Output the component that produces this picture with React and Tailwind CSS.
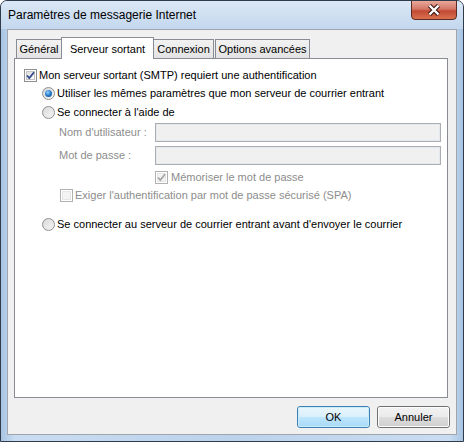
import React from 'react'

const font = { fontFamily: '"Liberation Sans", Arial, sans-serif' }

function CheckBox({ checked, disabled }) {
  return (
    <span
      className={`relative inline-block w-[13px] h-[13px] shrink-0 border ${disabled ? 'border-[#b1b1b1]' : 'border-[#8e8f8f]'}`}
    >
      <span
        className={`absolute inset-[1px] border ${disabled ? 'border-[#e6e6e6] bg-[#f4f4f4]' : 'border-[#c3c3c3] bg-gradient-to-br from-[#dcdcdc] to-[#ffffff]'}`}
      />
      {checked && (
        <svg className="absolute inset-0" width="11" height="11" viewBox="0 0 11 11">
          <path
            d="M2 5.5 L4.3 8 L9 2.2"
            fill="none"
            stroke={disabled ? '#a6a6a6' : '#324a8c'}
            strokeWidth="1.8"
          />
        </svg>
      )}
    </span>
  )
}

function Radio({ checked }) {
  return (
    <span className="relative inline-block w-[13px] h-[13px] shrink-0 rounded-full border border-[#8e8f8f] bg-gradient-to-br from-[#d6d6d6] to-[#fbfbfb]">
      <span className="absolute inset-[1px] rounded-full border border-[#e6e6e6]" />
      {checked && (
        <span className="absolute left-[2px] top-[2px] w-[7px] h-[7px] rounded-full bg-[radial-gradient(circle_at_40%_35%,#9bd2fb_0%,#2a83d1_45%,#0d3c84_100%)]" />
      )}
    </span>
  )
}

function Tab({ children, active, className = '' }) {
  if (active) {
    return (
      <div
        className={`relative z-10 h-[22px] -mb-[1px] flex justify-center items-start pt-[3px] bg-white border border-b-0 border-[#898c95] whitespace-nowrap ${className}`}
      >
        {children}
      </div>
    )
  }
  return (
    <div
      className={`h-[19px] mt-[3px] flex items-center justify-center pt-[1px] bg-gradient-to-b from-[#f2f2f2] to-[#e3e3e3] border border-b-0 border-[#898c95] whitespace-nowrap ${className}`}
    >
      {children}
    </div>
  )
}

function Field() {
  return (
    <div className="w-[286px] h-[19px] border border-[#abadb3] bg-[#f0f0f0]">
      <div className="w-full h-full border border-[#e3e9ef]" />
    </div>
  )
}

function Button({ children, primary }) {
  return (
    <button
      className={`w-[73px] h-[22px] rounded-[3px] border text-[11px] text-black ${
        primary
          ? 'border-[#3c7fb1] bg-[linear-gradient(#eaf6fd_0%,#d9f0fc_50%,#bee6fd_50%,#a7d9f5_100%)]'
          : 'border-[#707070] bg-[linear-gradient(#f2f2f2_0%,#ebebeb_50%,#dddddd_50%,#cfcfcf_100%)]'
      }`}
    >
      <span className={`block w-full h-full rounded-[2px] border ${primary ? 'border-[#c9ecfd]' : 'border-[#fcfcfc]'} leading-[18px]`}>
        {children}
      </span>
    </button>
  )
}

export default function App() {
  return (
    <div
      style={font}
      className="w-[464px] h-[442px] flex flex-col rounded-t-[7px] border border-[#2f3b4a] bg-[linear-gradient(90deg,#a8c4e2_0%,#c9dcf1_3%,#bcd3ec_50%,#c9dcf1_97%,#a8c4e2_100%)] text-[11px] text-black overflow-hidden whitespace-nowrap"
    >
      {/* barre de titre */}
      <div className="relative h-[28px] shrink-0 flex items-center pl-[7px] bg-gradient-to-b from-[#dbe8f6] to-[#c3d7ee]">
        <span className="text-[12px] text-black">Paramètres de messagerie Internet</span>
        <div className="absolute right-[6px] top-[-1px] w-[46px] h-[20px] rounded-b-[4px] border border-[#5b2a23] bg-[linear-gradient(#e9a99b_0%,#d47766_45%,#c24a33_55%,#d8714f_100%)] flex items-center justify-center">
          <svg width="16" height="12" viewBox="0 0 16 12">
            <path
              d="M3.5 1.5 L12.5 10.5 M12.5 1.5 L3.5 10.5"
              stroke="#3b1612"
              strokeWidth="4.4"
              fill="none"
            />
            <path d="M3.5 1.5 L12.5 10.5 M12.5 1.5 L3.5 10.5" stroke="#ffffff" strokeWidth="2.4" fill="none" />
          </svg>
        </div>
      </div>

      {/* zone client */}
      <div className="mx-[6px] mb-[7px] flex-1 flex flex-col border border-[#a0a5ad] bg-[#f0f0f0] pl-[6px] pr-[6px] pt-[6px] pb-[6px]">
        <div className="flex items-end pl-[2px] h-[22px]">
          <Tab className="w-[46px]">Général</Tab>
          <Tab active className="w-[93px] -mx-[1px]">Serveur sortant</Tab>
          <Tab className="w-[61px]">Connexion</Tab>
          <Tab className="w-[95px] ml-[1px]">Options avancées</Tab>
        </div>

        <div className="w-[434px] h-[340px] bg-white border border-[#898c95] pt-[7px] pl-[9px]">
          <div className="flex items-center gap-[2px] h-[18px]">
            <CheckBox checked />
            <span>Mon serveur sortant (SMTP) requiert une authentification</span>
          </div>

          <div className="pl-[18px]">
            <div className="flex items-center gap-[2px] h-[18px]">
              <Radio checked />
              <span>Utiliser les mêmes paramètres que mon serveur de courrier entrant</span>
            </div>
            <div className="flex items-center gap-[2px] h-[18px] mt-[1px]">
              <Radio />
              <span>Se connecter à l'aide de</span>
            </div>

            <div className="pl-[17px] text-[#8d8d8d]">
              <div className="flex items-center mt-[2px] h-[19px]">
                <span className="w-[96px]">Nom d'utilisateur :</span>
                <Field />
              </div>
              <div className="flex items-center mt-[4px] h-[19px]">
                <span className="w-[96px]">Mot de passe :</span>
                <Field />
              </div>
              <div className="flex items-center gap-[3px] mt-[6px] h-[13px] pl-[96px]">
                <CheckBox checked disabled />
                <span>Mémoriser le mot de passe</span>
              </div>
              <div className="flex items-center gap-[2px] mt-[5px] h-[13px] pl-[1px]">
                <CheckBox disabled />
                <span>Exiger l'authentification par mot de passe sécurisé (SPA)</span>
              </div>
            </div>

            <div className="flex items-center gap-[2px] h-[18px] mt-[13px]">
              <Radio />
              <span>Se connecter au serveur de courrier entrant avant d'envoyer le courrier</span>
            </div>
          </div>
        </div>

        <div className="flex justify-end gap-[7px] mt-[8px]">
          <Button primary>OK</Button>
          <Button>Annuler</Button>
        </div>
      </div>
    </div>
  )
}
